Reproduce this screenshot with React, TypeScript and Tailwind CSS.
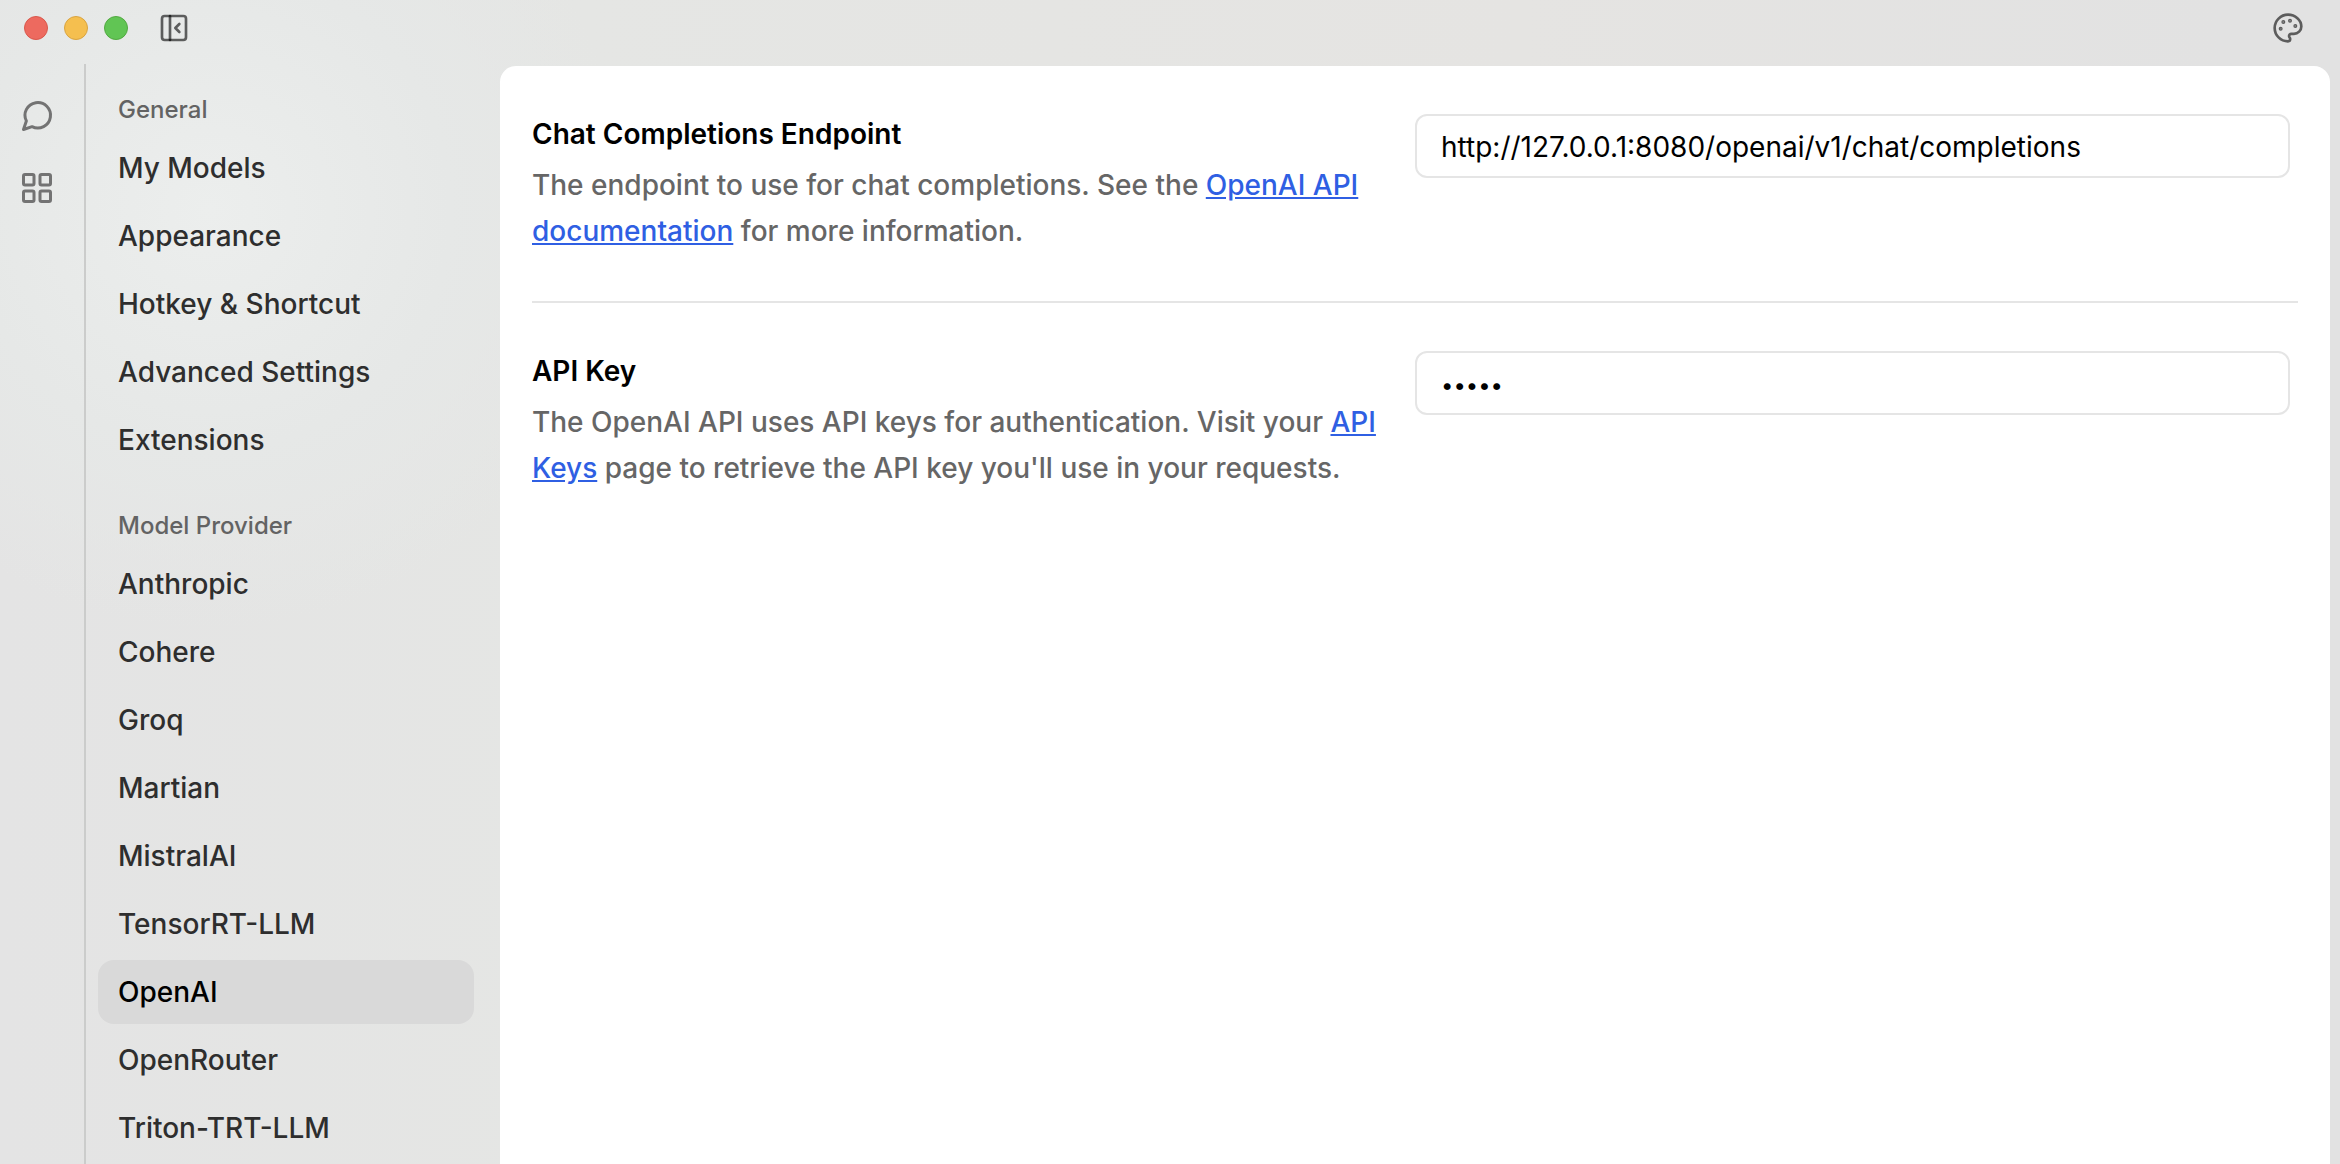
import React, { useState } from "react";

const general = ["My Models", "Appearance", "Hotkey & Shortcut", "Advanced Settings", "Extensions"];
const providers = ["Anthropic", "Cohere", "Groq", "Martian", "MistralAI", "TensorRT-LLM", "OpenAI", "OpenRouter", "Triton-TRT-LLM"];

const stroke = {
  viewBox: "0 0 24 24",
  fill: "none",
  stroke: "currentColor",
  strokeWidth: 2,
  strokeLinecap: "round" as const,
  strokeLinejoin: "round" as const,
  "aria-hidden": true,
};

function PanelIcon() {
  return (
    <svg {...stroke} className="size-8 text-black/60">
      <rect x="3" y="3" width="18" height="18" rx="2" />
      <path d="M9 3v18" />
      <path d="m16 15-3-3 3-3" />
    </svg>
  );
}

function PaletteIcon() {
  return (
    <svg {...stroke} className="size-8">
      <circle cx="13.5" cy="6.5" r=".5" fill="currentColor" />
      <circle cx="17.5" cy="10.5" r=".5" fill="currentColor" />
      <circle cx="8.5" cy="7.5" r=".5" fill="currentColor" />
      <circle cx="6.5" cy="12.5" r=".5" fill="currentColor" />
      <path d="M12 2C6.5 2 2 6.5 2 12s4.5 10 10 10c.926 0 1.648-.746 1.648-1.688 0-.437-.18-.835-.437-1.125-.29-.289-.438-.652-.438-1.125a1.64 1.64 0 0 1 1.668-1.668h1.996c3.051 0 5.555-2.503 5.555-5.554C21.965 6.012 17.461 2 12 2z" />
    </svg>
  );
}

function ChatIcon() {
  return (
    <svg {...stroke} className="size-9">
      <path d="m3 21 1.9-5.7a8.5 8.5 0 1 1 3.8 3.8z" />
    </svg>
  );
}

function GridIcon() {
  return (
    <svg {...stroke} className="size-9">
      <rect width="7" height="7" x="3" y="3" rx="1" />
      <rect width="7" height="7" x="14" y="3" rx="1" />
      <rect width="7" height="7" x="14" y="14" rx="1" />
      <rect width="7" height="7" x="3" y="14" rx="1" />
    </svg>
  );
}

function NavGroup({ title, items, active, onSelect }: { title: string; items: string[]; active: string; onSelect: (s: string) => void }) {
  return (
    <section>
      <h2 className="mb-2.5 px-5 text-2xl leading-8 font-medium text-[#636363]">{title}</h2>
      <ul className="flex flex-col gap-1">
        {items.map((item) => (
          <li key={item}>
            <button
              type="button"
              onClick={() => onSelect(item)}
              className={
                item === active
                  ? "flex h-16 w-full items-center rounded-2xl bg-[#d9d9d9] px-5 text-[28px] font-medium text-black"
                  : "flex h-16 w-full items-center rounded-2xl px-5 text-[28px] font-medium text-[#2e2e2e]"
              }
            >
              {item}
            </button>
          </li>
        ))}
      </ul>
    </section>
  );
}

function Setting({ id, title, secret, value, children }: { id: string; title: string; secret?: boolean; value: string; children: React.ReactNode }) {
  return (
    <section className="grid grid-cols-2 border-b-2 border-[#e5e5e5] pt-12 pb-[47px] last:border-b-0">
      <div>
        <label htmlFor={id} className="block text-[28px] leading-10 font-semibold text-black">{title}</label>
        <p className="mt-2 text-[28px] leading-[46px] font-medium text-[#666666]">{children}</p>
      </div>
      <div className="pr-2">
        <input
          id={id}
          type={secret ? "password" : "text"}
          defaultValue={value}
          className={
            secret
              ? "h-16 w-full rounded-xl border-2 border-[#e5e5e5] bg-white px-6 pt-1 text-[22px] text-black outline-none"
              : "h-16 w-full rounded-xl border-2 border-[#e5e5e5] bg-white px-6 pt-0.5 text-[28px] text-black outline-none"
          }
        />
      </div>
    </section>
  );
}

export default function App() {
  const [active, setActive] = useState("OpenAI");
  const link = "text-[#2f5fe3] underline";
  return (
    <div className="flex h-screen flex-col overflow-hidden bg-[#e4e4e4] bg-[radial-gradient(circle_at_210px_210px,#eceeed_0px,#e6e8e7_240px,transparent_420px),linear-gradient(90deg,#e4e4e4_0%,#e5e6e4_25%,#e5e4e2_65%,#e2e2e2_95%)] font-[Inter,sans-serif]">
      <header className="flex h-14 shrink-0 items-center justify-between pr-9 pl-6 text-[#5c5c5c]">
        <div className="flex items-center gap-4">
          <button type="button" aria-label="Close" className="size-6 rounded-full border border-[#d9584c] bg-[#ed6a5f]" />
          <button type="button" aria-label="Minimize" className="size-6 rounded-full border border-[#d9a441] bg-[#f5bf4f]" />
          <button type="button" aria-label="Zoom" className="size-6 rounded-full border border-[#52a941] bg-[#61c554]" />
          <button type="button" aria-label="Toggle side panel" className="ml-3.5"><PanelIcon /></button>
        </div>
        <button type="button" aria-label="Theme"><PaletteIcon /></button>
      </header>
      <div className="flex min-h-0 flex-1">
        <nav aria-label="Main" className="mt-2 flex w-[86px] shrink-0 flex-col gap-9 border-r-2 border-[#cbcccb] pt-[34px] pl-[19px] text-[#737373]">
          <button type="button" aria-label="Threads" className="size-9"><ChatIcon /></button>
          <button type="button" aria-label="Hub" className="size-9"><GridIcon /></button>
        </nav>
        <aside className="flex w-[414px] shrink-0 flex-col gap-[38px] overflow-hidden pt-[38px] pr-[26px] pl-3">
          <NavGroup title="General" items={general} active={active} onSelect={setActive} />
          <NavGroup title="Model Provider" items={providers} active={active} onSelect={setActive} />
        </aside>
        <main className="mt-2.5 mr-2.5 min-w-0 flex-1 rounded-t-2xl bg-white px-8">
          <Setting id="endpoint" title="Chat Completions Endpoint" value="http://127.0.0.1:8080/openai/v1/chat/completions">
            The endpoint to use for chat completions. See the{" "}
            <a href="#docs" className={link}>OpenAI API documentation</a> for more information.
          </Setting>
          <Setting id="api-key" title="API Key" secret value="abcde">
            The OpenAI API uses API keys for authentication. Visit your{" "}
            <a href="#keys" className={link}>API Keys</a> page to retrieve the API key you'll use in your requests.
          </Setting>
        </main>
      </div>
    </div>
  );
}
